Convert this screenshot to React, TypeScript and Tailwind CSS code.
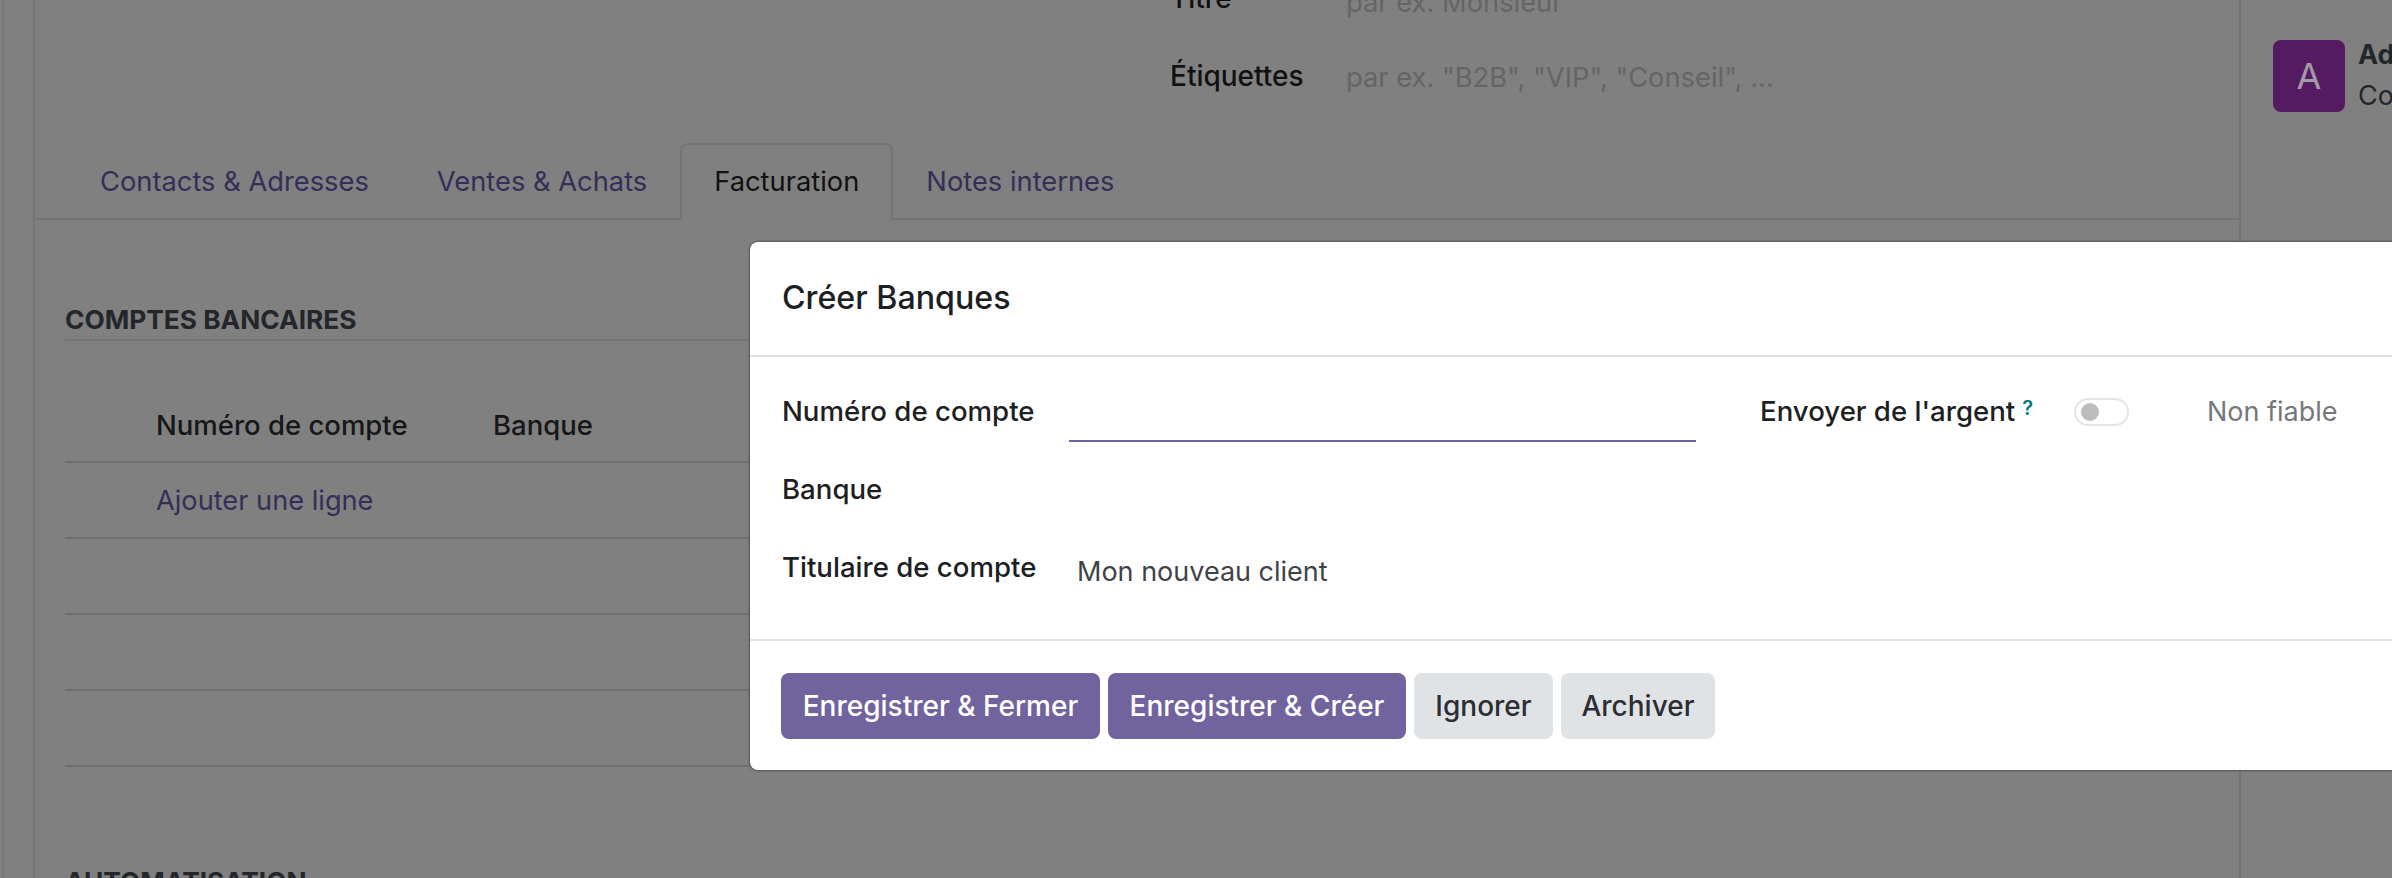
const font = { fontFamily: "Inter, 'Noto Sans', sans-serif" }

const tabs = ["Contacts & Adresses", "Ventes & Achats", "Facturation", "Notes internes"]
const columns = ["Numéro de compte", "Banque"]

function Tabs() {
  return (
    <div className="flex h-[77px] border-b-2 border-[#747474] pl-[31px] text-[27.3px]">
      {tabs.map((tab) =>
        tab === "Facturation" ? (
          <div
            key={tab}
            className="-mb-[2px] -ml-[1px] flex h-[77px] items-center rounded-t-lg border-x-2 border-t-2 border-[#747474] bg-[#808080] px-[32px] text-[#111111]"
          >
            {tab}
          </div>
        ) : (
          <div key={tab} className="flex items-center px-[34px] pt-[4px] text-[#332f57] first:pr-[34px] last:-ml-[1px]">
            {tab}
          </div>
        ),
      )}
    </div>
  )
}

function BankTable() {
  return (
    <div className="px-[30px]">
      <h3 className="mt-[80px] h-[41px] border-b-2 border-[#747474] text-[26.3px] leading-[40px] font-bold text-[#23262a] uppercase">
        Comptes bancaires
      </h3>
      <div className="mt-[47px] flex h-[75px] items-center border-b-2 border-[#6f6f6f] pt-[2px] pl-[91px] text-[27.5px] font-medium text-[#15171a]">
        <span className="w-[337px]">{columns[0]}</span>
        <span>{columns[1]}</span>
      </div>
      <div className="flex h-[76px] items-center border-b-2 border-[#6f6f6f] pt-[2px] pl-[91px] text-[27.2px] text-[#332f57]">Ajouter une ligne</div>
      <div className="h-[76px] border-b-2 border-[#6f6f6f]" />
      <div className="h-[76px] border-b-2 border-[#6f6f6f]" />
      <div className="h-[76px] border-b-2 border-[#6f6f6f]" />
      <h3 className="mt-[95px] text-[26.3px] leading-[40px] font-bold text-[#23262a] uppercase">Automatisation</h3>
    </div>
  )
}

function Dialog() {
  return (
    <div className="absolute top-[242px] right-0 left-[750px] flex h-[528px] flex-col rounded-l-lg bg-white text-[#1d2023] shadow-[0_0_2px_1px_#555555]">
      <div className="flex h-[115px] shrink-0 items-center border-b-2 border-[#dee2e6] px-[32px] text-[32.2px] font-medium">
        Créer Banques
      </div>

      <div className="h-[284px] shrink-0 border-b-2 border-[#dee2e6] px-[32px] pt-[16px] text-[27.6px]">
        <div className="flex h-[78px] items-center">
          <label className="w-[287px] shrink-0 font-medium">Numéro de compte</label>
          <input className="h-[69px] w-[627px] shrink-0 self-start border-b-2 border-[#71639e] outline-none" />
          <label className="ml-[64px] w-[314px] shrink-0 font-medium">
            Envoyer de l'argent
            <sup className="relative -top-[6px] ml-[7px] text-[20px] font-semibold text-[#017e84]">?</sup>
          </label>
          <div className="flex h-[28px] w-[55px] shrink-0 items-center rounded-full border-2 border-[#e3e5e8] pl-[5px]">
            <div className="h-[18px] w-[18px] rounded-full bg-[#bdbdbd]" />
          </div>
          <span className="ml-[78px] text-[27px] text-[#74777b]">Non fiable</span>
        </div>
        <div className="flex h-[78px] items-center font-medium">Banque</div>
        <div className="flex h-[78px] items-center">
          <label className="w-[295px] shrink-0 font-medium">Titulaire de compte</label>
          <span className="pt-[8px] text-[27px] text-[#3f4347]">Mon nouveau client</span>
        </div>
      </div>

      <div className="flex gap-[8px] px-[31px] pt-[32px] text-[28px]">
        <button className="h-[66px] w-[319px] rounded-lg bg-[#71639e] font-medium text-white">Enregistrer & Fermer</button>
        <button className="h-[66px] w-[298px] rounded-lg bg-[#71639e] font-medium text-white">Enregistrer & Créer</button>
        <button className="h-[66px] w-[139px] rounded-lg bg-[#e0e3e6] font-medium text-[#2b2e33]">Ignorer</button>
        <button className="h-[66px] w-[154px] rounded-lg bg-[#e0e3e6] font-medium text-[#2b2e33]">Archiver</button>
      </div>
    </div>
  )
}

export default function App() {
  return (
    <div style={font} className="relative flex h-[878px] w-[2392px] overflow-hidden bg-[#808080] text-[27px]">
      {/* left gutter */}
      <div className="ml-[2px] w-[31px] shrink-0 border-l-2 border-[#777777]" />

      {/* form sheet */}
      <div className="w-[2208px] shrink-0 border-x-2 border-[#747474]">
        <div className="-mt-[38px] pl-[1135px] text-[27.3px]">
          <div className="flex h-[76px] items-center">
            <span className="-mt-[4px] w-[176px] text-[28px] font-medium text-[#111111]">Titre</span>
            <span className="pt-[6px] text-[#656565]">par ex. Monsieur</span>
          </div>
          <div className="flex h-[76px] items-center">
            <span className="w-[176px] text-[28px] font-medium text-[#111111]">Étiquettes</span>
            <span className="pt-[4px] text-[#656565]">par ex. "B2B", "VIP", "Conseil", ...</span>
          </div>
        </div>
        <div className="h-[29px]" />
        <Tabs />
        <BankTable />
      </div>

      {/* chatter */}
      <div className="flex shrink-0 items-start gap-[13px] pt-[40px] pl-[32px]">
        <div className="flex h-[72px] w-[72px] shrink-0 items-center justify-center rounded-lg bg-[#541a62] text-[36px] text-[#a39aa6]">
          A
        </div>
        <div className="-mt-[6px] flex flex-col whitespace-nowrap text-[#23262a]">
          <span className="leading-[41px] font-bold">Administrator</span>
          <span className="leading-[41px]">Compte</span>
        </div>
      </div>

      <Dialog />
    </div>
  )
}
